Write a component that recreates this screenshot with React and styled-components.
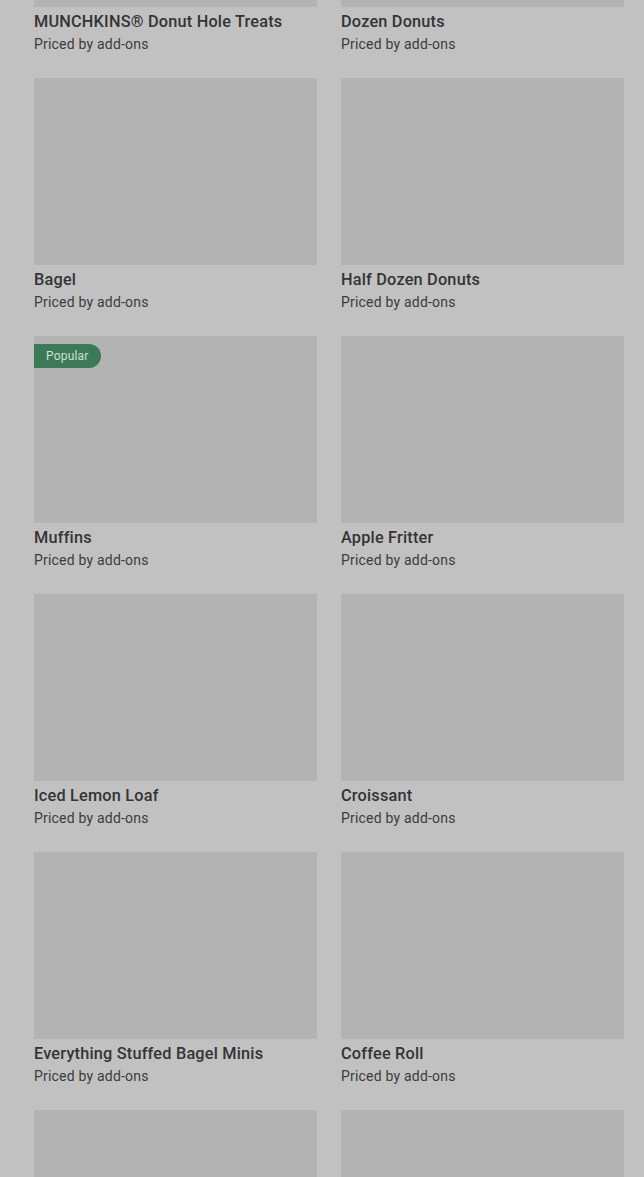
import React from 'react'
import styled, { createGlobalStyle } from 'styled-components'

const GlobalStyle = createGlobalStyle`
  html, body {
    margin: 0;
    padding: 0;
    background: #c1c1c1;
    overflow: hidden;
  }
  body {
    font-family: Roboto, "Liberation Sans", Arial, sans-serif;
  }
`

const items = [
  { name: 'MUNCHKINS® Donut Hole Treats' },
  { name: 'Dozen Donuts' },
  { name: 'Bagel' },
  { name: 'Half Dozen Donuts' },
  { name: 'Muffins', popular: true },
  { name: 'Apple Fritter' },
  { name: 'Iced Lemon Loaf' },
  { name: 'Croissant' },
  { name: 'Everything Stuffed Bagel Minis' },
  { name: 'Coffee Roll' },
  { name: null },
  { name: null },
]

function App() {
  return (
    <Page>
      <GlobalStyle />
      <Grid>
        {items.map((item, i) => (
          <Card key={i}>
            <Thumb>
              {item.popular && <Badge>Popular</Badge>}
            </Thumb>
            {item.name && (
              <>
                <Title>{item.name}</Title>
                <Sub>Priced by add-ons</Sub>
              </>
            )}
          </Card>
        ))}
      </Grid>
    </Page>
  )
}

export default App

const Page = styled.div`
  height: 1177px;
  overflow: hidden;
  padding: 0 20px 0 34px;
`

const Grid = styled.div`
  display: grid;
  grid-template-columns: 283px 283px;
  column-gap: 24px;
  row-gap: 24px;
  margin-top: -180px;
`

const Card = styled.div`
  display: flex;
  flex-direction: column;
`

const Thumb = styled.div`
  position: relative;
  height: 187px;
  background: #b3b3b3;
`

const Badge = styled.span`
  position: absolute;
  top: 8px;
  left: 0;
  height: 24px;
  padding: 0 12px;
  display: flex;
  align-items: center;
  background: #3b7a57;
  color: #cfe0d6;
  font-size: 12px;
  letter-spacing: 0.2px;
  border-radius: 0 12px 12px 0;
`

const Title = styled.div`
  margin-top: 5px;
  font-size: 16.3px;
  line-height: 20px;
  font-weight: 500;
  letter-spacing: 0.2px;
  color: #343434;
  white-space: nowrap;
`

const Sub = styled.div`
  margin-top: 2px;
  font-size: 14px;
  line-height: 20px;
  letter-spacing: 0.2px;
  color: #3c3c3c;
`
